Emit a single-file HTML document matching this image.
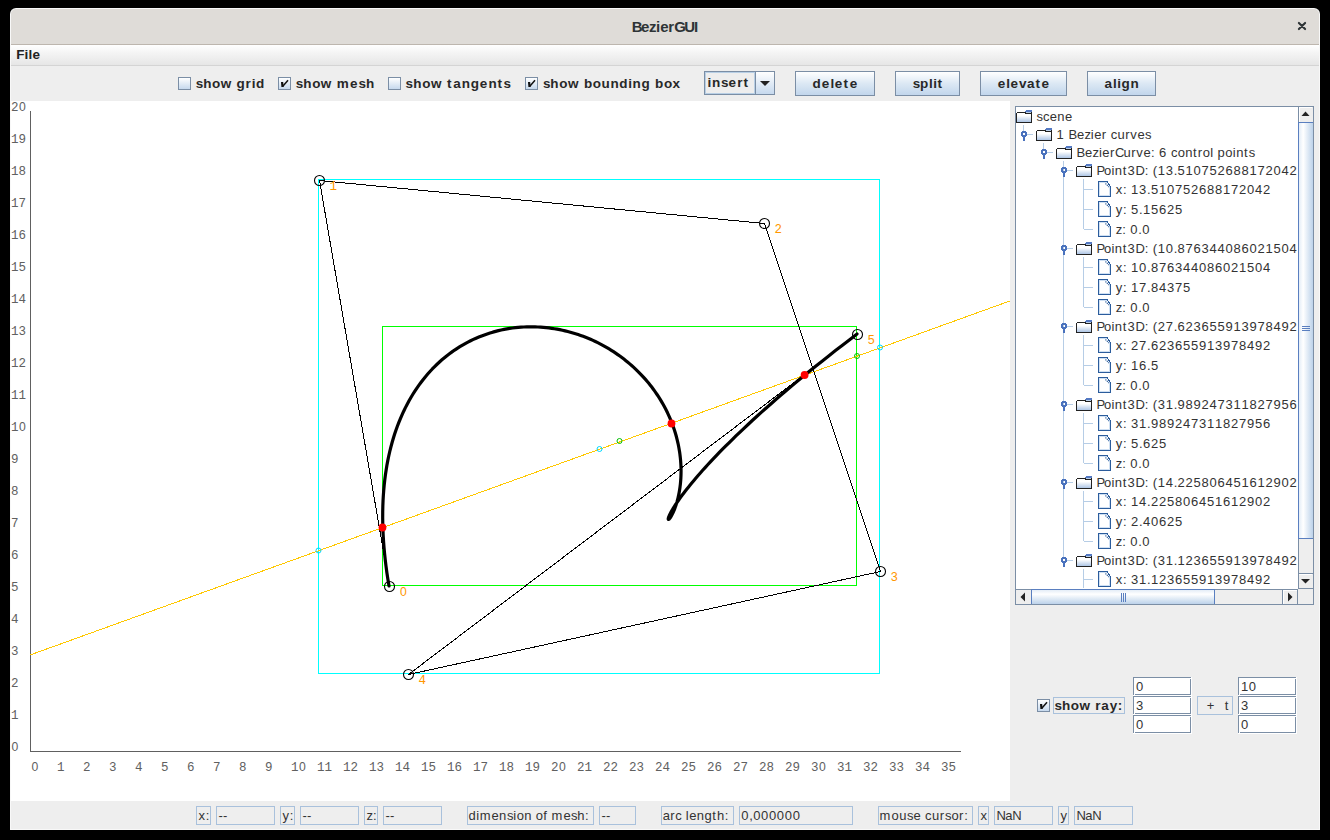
<!DOCTYPE html>
<html><head><meta charset="utf-8"><title>BezierGUI</title>
<style>
html,body{margin:0;padding:0;background:#000;width:1330px;height:840px;overflow:hidden;}
.b{position:absolute;}
.t{position:absolute;white-space:nowrap;}
</style></head><body>
<div class="b" style="left:10px;top:8px;width:1310px;height:822px;background:#f8f8f8;border-radius:6px 6px 0 0;"></div><div class="b" style="left:11px;top:9px;width:1308px;height:820px;background:#eeeeee;border-radius:5px 5px 0 0;"></div><div class="b" style="left:11px;top:9px;width:1308px;height:35px;background:#dfdcd8;border-radius:5px 5px 0 0;"></div><div class="b" style="left:11px;top:44px;width:1308px;height:1px;background:#bdb6ae;"></div><svg class="b" style="left:1297px;top:21px" width="12" height="10"><path d="M1.9 1.9 L8.1 8.1 M8.1 1.9 L1.9 8.1" stroke="#2e3436" stroke-width="2.1" stroke-linecap="round"/></svg><div class="b" style="left:11px;top:45px;width:1308px;height:20px;background:linear-gradient(#ffffff,#f4f4f4 40%,#e6e6e6);"></div><div class="b" style="left:11px;top:65px;width:1308px;height:1px;background:#d4d4d4;"></div><div class="b" style="left:11px;top:66px;width:1308px;height:35px;background:#eeeeee;"></div><div class="b" style="left:11px;top:101px;width:999px;height:700px;background:#ffffff;"></div><div class="b" style="left:11px;top:801px;width:1308px;height:28px;background:#eeeeee;"></div><div class="b" style="left:178px;top:77px;width:13px;height:13px;box-sizing:border-box;border:1px solid #7b8ea5;background:linear-gradient(#ffffff,#c6d9ee);"></div><div class="b" style="left:278px;top:77px;width:13px;height:13px;box-sizing:border-box;border:1px solid #7b8ea5;background:linear-gradient(#ffffff,#c6d9ee);"></div><svg class="b" style="left:278px;top:77px" width="13" height="13"><path d="M3 5 H5.2 L5.6 10 H3.4 Z" fill="#111"/><path d="M4.6 9.6 L10 3.3" stroke="#111" stroke-width="1.5" fill="none"/></svg><div class="b" style="left:388px;top:77px;width:13px;height:13px;box-sizing:border-box;border:1px solid #7b8ea5;background:linear-gradient(#ffffff,#c6d9ee);"></div><div class="b" style="left:525px;top:77px;width:13px;height:13px;box-sizing:border-box;border:1px solid #7b8ea5;background:linear-gradient(#ffffff,#c6d9ee);"></div><svg class="b" style="left:525px;top:77px" width="13" height="13"><path d="M3 5 H5.2 L5.6 10 H3.4 Z" fill="#111"/><path d="M4.6 9.6 L10 3.3" stroke="#111" stroke-width="1.5" fill="none"/></svg><div class="b" style="left:704px;top:71px;width:71px;height:24px;box-sizing:border-box;border:1px solid #7b8ea5;background:#eeeeee;"></div><div class="b" style="left:705px;top:72px;width:50px;height:22px;box-sizing:border-box;border:1px solid #b8cfe5;"></div><div class="b" style="left:755px;top:71px;width:1px;height:24px;background:#7b8ea5;"></div><div class="b" style="left:756px;top:72px;width:18px;height:22px;background:linear-gradient(#ffffff,#c6d9ee);"></div><svg class="b" style="left:758px;top:78px" width="14" height="10"><path d="M2 3 H12 L7 8 Z" fill="#222"/></svg><div class="b" style="left:795px;top:71px;width:80px;height:25px;box-sizing:border-box;border:1px solid #7b8ea5;background:linear-gradient(#ffffff,#dce8f4 50%,#c2d6ec);"></div><div class="b" style="left:895px;top:71px;width:65px;height:25px;box-sizing:border-box;border:1px solid #7b8ea5;background:linear-gradient(#ffffff,#dce8f4 50%,#c2d6ec);"></div><div class="b" style="left:980px;top:71px;width:87px;height:25px;box-sizing:border-box;border:1px solid #7b8ea5;background:linear-gradient(#ffffff,#dce8f4 50%,#c2d6ec);"></div><div class="b" style="left:1087px;top:71px;width:69px;height:25px;box-sizing:border-box;border:1px solid #7b8ea5;background:linear-gradient(#ffffff,#dce8f4 50%,#c2d6ec);"></div><svg class="b" style="left:0;top:0" width="1010" height="801" viewBox="0 0 1010 801"><defs><clipPath id="cv"><rect x="11" y="101" width="999" height="700"/></clipPath></defs><g clip-path="url(#cv)"><g shape-rendering="crispEdges" stroke="#606060" stroke-width="1"><line x1="30.5" y1="111" x2="30.5" y2="752"/><line x1="30" y1="751.5" x2="961" y2="751.5"/></g><g font-family="'Liberation Mono', monospace" font-size="12.5" fill="#606060"><text x="11" y="751"><tspan font-family="'Liberation Sans', sans-serif" font-size="12.2" dx="0.4">0</tspan></text><text x="11" y="719">1</text><text x="11" y="687">2</text><text x="11" y="655">3</text><text x="11" y="623">4</text><text x="11" y="591">5</text><text x="11" y="559">6</text><text x="11" y="527">7</text><text x="11" y="495">8</text><text x="11" y="463">9</text><text x="11" y="431">1<tspan font-family="'Liberation Sans', sans-serif" font-size="12.2" dx="0.4">0</tspan></text><text x="11" y="399">11</text><text x="11" y="367">12</text><text x="11" y="335">13</text><text x="11" y="303">14</text><text x="11" y="271">15</text><text x="11" y="239">16</text><text x="11" y="207">17</text><text x="11" y="175">18</text><text x="11" y="143">19</text><text x="11" y="111">2<tspan font-family="'Liberation Sans', sans-serif" font-size="12.2" dx="0.4">0</tspan></text><text x="31" y="771"><tspan font-family="'Liberation Sans', sans-serif" font-size="12.2" dx="0.4">0</tspan></text><text x="57" y="771">1</text><text x="83" y="771">2</text><text x="109" y="771">3</text><text x="135" y="771">4</text><text x="161" y="771">5</text><text x="187" y="771">6</text><text x="213" y="771">7</text><text x="239" y="771">8</text><text x="265" y="771">9</text><text x="291" y="771">1<tspan font-family="'Liberation Sans', sans-serif" font-size="12.2" dx="0.4">0</tspan></text><text x="317" y="771">11</text><text x="343" y="771">12</text><text x="369" y="771">13</text><text x="395" y="771">14</text><text x="421" y="771">15</text><text x="447" y="771">16</text><text x="473" y="771">17</text><text x="499" y="771">18</text><text x="525" y="771">19</text><text x="551" y="771">2<tspan font-family="'Liberation Sans', sans-serif" font-size="12.2" dx="0.4">0</tspan></text><text x="577" y="771">21</text><text x="603" y="771">22</text><text x="629" y="771">23</text><text x="655" y="771">24</text><text x="681" y="771">25</text><text x="707" y="771">26</text><text x="733" y="771">27</text><text x="759" y="771">28</text><text x="785" y="771">29</text><text x="811" y="771">3<tspan font-family="'Liberation Sans', sans-serif" font-size="12.2" dx="0.4">0</tspan></text><text x="837" y="771">31</text><text x="863" y="771">32</text><text x="889" y="771">33</text><text x="915" y="771">34</text><text x="941" y="771">35</text></g><g shape-rendering="crispEdges" fill="none" stroke-width="1"><rect x="318.5" y="179.5" width="561" height="494" stroke="#00ffff"/><rect x="382.5" y="326.5" width="474" height="259" stroke="#00ff00"/></g><line x1="30.0" y1="655.0" x2="1010.0000000000001" y2="300.93548387096774" stroke="#ffc800" stroke-width="1" shape-rendering="crispEdges"/><polyline points="389.5,586.5 319.5,180.5 764.5,223.5 880.5,571.5 408.5,674.5 857.5,334.5" fill="none" stroke="#000" stroke-width="1" shape-rendering="crispEdges"/><polyline points="389.00,586.00 387.89,579.28 386.89,572.67 386.01,566.15 385.23,559.73 384.56,553.41 383.99,547.18 383.53,541.06 383.17,535.03 382.91,529.10 382.75,523.27 382.68,517.53 382.71,511.89 382.83,506.34 383.04,500.89 383.34,495.53 383.73,490.27 384.20,485.10 384.76,480.03 385.39,475.05 386.11,470.16 386.91,465.36 387.79,460.65 388.74,456.04 389.76,451.52 390.86,447.09 392.03,442.74 393.26,438.49 394.56,434.33 395.93,430.25 397.36,426.26 398.86,422.37 400.41,418.55 402.03,414.83 403.70,411.19 405.43,407.63 407.21,404.17 409.05,400.78 410.93,397.48 412.87,394.27 414.86,391.13 416.89,388.08 418.97,385.11 421.09,382.23 423.25,379.42 425.46,376.69 427.71,374.05 429.99,371.48 432.31,368.99 434.67,366.59 437.06,364.25 439.48,362.00 441.93,359.82 444.42,357.72 446.93,355.69 449.47,353.74 452.04,351.86 454.63,350.05 457.24,348.32 459.88,346.66 462.54,345.07 465.22,343.56 467.91,342.11 470.62,340.73 473.35,339.43 476.10,338.19 478.85,337.02 481.62,335.91 484.40,334.88 487.19,333.91 489.99,333.00 492.80,332.16 495.61,331.39 498.43,330.67 501.25,330.02 504.08,329.44 506.91,328.91 509.74,328.44 512.57,328.04 515.40,327.69 518.23,327.41 521.05,327.18 523.87,327.01 526.69,326.89 529.50,326.83 532.30,326.83 535.10,326.88 537.89,326.99 540.66,327.14 543.43,327.36 546.19,327.62 548.93,327.93 551.66,328.30 554.38,328.71 557.08,329.18 559.77,329.69 562.44,330.25 565.09,330.85 567.73,331.51 570.34,332.20 572.94,332.95 575.52,333.73 578.08,334.56 580.61,335.43 583.13,336.35 585.62,337.30 588.08,338.30 590.53,339.33 592.95,340.41 595.34,341.52 597.71,342.67 600.05,343.85 602.36,345.07 604.65,346.33 606.90,347.62 609.13,348.94 611.33,350.30 613.50,351.69 615.64,353.11 617.75,354.56 619.83,356.03 621.88,357.54 623.90,359.08 625.88,360.64 627.83,362.23 629.75,363.85 631.64,365.49 633.49,367.15 635.30,368.84 637.09,370.55 638.84,372.29 640.55,374.04 642.23,375.81 643.87,377.61 645.48,379.42 647.05,381.25 648.59,383.10 650.09,384.96 651.56,386.84 652.98,388.73 654.38,390.64 655.73,392.56 657.05,394.50 658.33,396.44 659.58,398.40 660.79,400.36 661.96,402.34 663.09,404.32 664.19,406.31 665.26,408.31 666.28,410.31 667.27,412.32 668.22,414.34 669.14,416.35 670.02,418.37 670.86,420.39 671.67,422.42 672.44,424.44 673.18,426.46 673.88,428.48 674.55,430.50 675.18,432.52 675.78,434.53 676.34,436.54 676.87,438.54 677.36,440.54 677.83,442.53 678.26,444.51 678.65,446.48 679.02,448.45 679.35,450.40 679.65,452.35 679.92,454.28 680.16,456.20 680.37,458.10 680.55,460.00 680.70,461.87 680.82,463.73 680.92,465.58 680.99,467.41 681.03,469.22 681.05,471.01 681.04,472.78 681.00,474.53 680.94,476.26 680.86,477.97 680.76,479.65 680.63,481.31 680.49,482.95 680.32,484.56 680.13,486.14 679.93,487.70 679.70,489.23 679.46,490.74 679.20,492.21 678.93,493.65 678.65,495.06 678.35,496.45 678.04,497.79 677.71,499.11 677.38,500.39 677.04,501.64 676.68,502.85 676.32,504.03 675.96,505.17 675.59,506.27 675.21,507.33 674.84,508.35 674.46,509.34 674.08,510.28 673.70,511.18 673.32,512.04 672.95,512.86 672.58,513.63 672.21,514.36 671.86,515.04 671.51,515.67 671.17,516.26 670.84,516.81 670.52,517.30 670.22,517.74 669.94,518.14 669.67,518.48 669.41,518.78 669.18,519.02 668.97,519.21 668.78,519.34 668.62,519.42 668.48,519.45 668.37,519.42 668.29,519.33 668.24,519.19 668.22,518.99 668.23,518.73 668.28,518.41 668.37,518.04 668.50,517.60 668.67,517.10 668.88,516.54 669.14,515.91 669.45,515.23 669.80,514.48 670.20,513.66 670.66,512.78 671.17,511.83 671.73,510.82 672.36,509.73 673.04,508.58 673.79,507.37 674.60,506.08 675.47,504.72 676.42,503.29 677.44,501.79 678.53,500.22 679.69,498.58 680.93,496.86 682.25,495.07 683.65,493.20 685.14,491.26 686.71,489.24 688.38,487.15 690.13,484.98 691.97,482.73 693.91,480.40 695.95,478.00 698.09,475.51 700.33,472.95 702.68,470.30 705.14,467.57 707.70,464.76 710.38,461.87 713.18,458.90 716.09,455.84 719.12,452.70 722.28,449.47 725.56,446.16 728.98,442.76 732.52,439.27 736.20,435.70 740.01,432.04 743.97,428.29 748.07,424.46 752.31,420.53 756.70,416.52 761.25,412.41 765.94,408.21 770.80,403.93 775.81,399.55 780.99,395.08 786.34,390.51 791.85,385.85 797.54,381.10 803.40,376.26 809.44,371.32 815.66,366.28 822.07,361.15 828.67,355.92 835.46,350.60 842.44,345.18 849.62,339.66 857.00,334.04" fill="none" stroke="#000" stroke-width="3.2" stroke-linejoin="round" stroke-linecap="round"/><circle cx="389.5" cy="586.5" r="5" fill="none" stroke="#000" stroke-width="1.1"/><text x="399.5" y="596" font-family="'Liberation Mono', monospace" font-size="12.5" fill="#ff9600"><tspan font-family="'Liberation Sans', sans-serif" font-size="12.2" dx="0.4">0</tspan></text><circle cx="319.5" cy="180.5" r="5" fill="none" stroke="#000" stroke-width="1.1"/><text x="329.5" y="190" font-family="'Liberation Mono', monospace" font-size="12.5" fill="#ff9600">1</text><circle cx="764.5" cy="223.5" r="5" fill="none" stroke="#000" stroke-width="1.1"/><text x="774.5" y="233" font-family="'Liberation Mono', monospace" font-size="12.5" fill="#ff9600">2</text><circle cx="880.5" cy="571.5" r="5" fill="none" stroke="#000" stroke-width="1.1"/><text x="890.5" y="581" font-family="'Liberation Mono', monospace" font-size="12.5" fill="#ff9600">3</text><circle cx="408.5" cy="674.5" r="5" fill="none" stroke="#000" stroke-width="1.1"/><text x="418.5" y="684" font-family="'Liberation Mono', monospace" font-size="12.5" fill="#ff9600">4</text><circle cx="857.5" cy="334.5" r="5" fill="none" stroke="#000" stroke-width="1.1"/><text x="867.5" y="344" font-family="'Liberation Mono', monospace" font-size="12.5" fill="#ff9600">5</text><circle cx="318.5" cy="550.5" r="2.5" fill="none" stroke="#00d8ff" stroke-width="1"/><circle cx="880" cy="347.5" r="2.5" fill="none" stroke="#00d8ff" stroke-width="1"/><circle cx="599.5" cy="449" r="2.5" fill="none" stroke="#00d8ff" stroke-width="1"/><circle cx="857" cy="356" r="2.5" fill="none" stroke="#00c000" stroke-width="1"/><circle cx="619.5" cy="441" r="2.5" fill="none" stroke="#00c000" stroke-width="1"/><circle cx="382.5" cy="527.5" r="3.9" fill="#ff0000"/><circle cx="671.5" cy="423.5" r="3.9" fill="#ff0000"/><circle cx="804.6" cy="375" r="3.9" fill="#ff0000"/></g></svg><div class="b" style="left:1015px;top:106px;width:299px;height:499px;box-sizing:border-box;border:1px solid #7b8ea5;background:#fff;"></div><svg class="b" style="left:1016px;top:107px" width="281" height="481" viewBox="1016 107 281 481"><defs><linearGradient id="fg" x1="0" y1="0" x2="0" y2="1"><stop offset="0" stop-color="#fff"/><stop offset="0.3" stop-color="#fff"/><stop offset="1" stop-color="#aec6e6"/></linearGradient></defs><g stroke="#b6cde6" stroke-width="1" shape-rendering="crispEdges"><line x1="1023.5" y1="125" x2="1023.5" y2="131"/><line x1="1043.5" y1="143" x2="1043.5" y2="149"/><line x1="1063.5" y1="161" x2="1063.5" y2="557"/><line x1="1027" y1="134.5" x2="1033" y2="134.5"/><line x1="1047" y1="152.5" x2="1053" y2="152.5"/><line x1="1067" y1="170.5" x2="1073" y2="170.5"/><line x1="1083.5" y1="189.5" x2="1093" y2="189.5"/><line x1="1083.5" y1="209.5" x2="1093" y2="209.5"/><line x1="1083.5" y1="229.5" x2="1093" y2="229.5"/><line x1="1067" y1="248.5" x2="1073" y2="248.5"/><line x1="1083.5" y1="267.5" x2="1093" y2="267.5"/><line x1="1083.5" y1="287.5" x2="1093" y2="287.5"/><line x1="1083.5" y1="307.5" x2="1093" y2="307.5"/><line x1="1067" y1="326.5" x2="1073" y2="326.5"/><line x1="1083.5" y1="345.5" x2="1093" y2="345.5"/><line x1="1083.5" y1="365.5" x2="1093" y2="365.5"/><line x1="1083.5" y1="385.5" x2="1093" y2="385.5"/><line x1="1067" y1="404.5" x2="1073" y2="404.5"/><line x1="1083.5" y1="423.5" x2="1093" y2="423.5"/><line x1="1083.5" y1="443.5" x2="1093" y2="443.5"/><line x1="1083.5" y1="463.5" x2="1093" y2="463.5"/><line x1="1067" y1="482.5" x2="1073" y2="482.5"/><line x1="1083.5" y1="501.5" x2="1093" y2="501.5"/><line x1="1083.5" y1="521.5" x2="1093" y2="521.5"/><line x1="1083.5" y1="541.5" x2="1093" y2="541.5"/><line x1="1067" y1="560.5" x2="1073" y2="560.5"/><line x1="1083.5" y1="579.5" x2="1093" y2="579.5"/><line x1="1083.5" y1="599.5" x2="1093" y2="599.5"/><line x1="1083.5" y1="619.5" x2="1093" y2="619.5"/><line x1="1083.5" y1="179" x2="1083.5" y2="229"/><line x1="1083.5" y1="257" x2="1083.5" y2="307"/><line x1="1083.5" y1="335" x2="1083.5" y2="385"/><line x1="1083.5" y1="413" x2="1083.5" y2="463"/><line x1="1083.5" y1="491" x2="1083.5" y2="541"/><line x1="1083.5" y1="569" x2="1083.5" y2="600"/></g><g transform="translate(1016,110)" shape-rendering="crispEdges"><rect x="1" y="3" width="14" height="9" fill="url(#fg)"/><rect x="10" y="0" width="6" height="1" fill="#5479c2"/><rect x="9" y="1" width="7" height="1" fill="#5479c2"/><rect x="10" y="2" width="5" height="1" fill="#b7cde8"/><rect x="1" y="2" width="9" height="1" fill="#222"/><rect x="15" y="2" width="1" height="11" fill="#222"/><rect x="0" y="3" width="1" height="10" fill="#222"/><rect x="9" y="3" width="7" height="1" fill="#222"/><rect x="0" y="12" width="16" height="1" fill="#222"/></g><text font-family="'Liberation Sans', sans-serif" x="1036.60 1042.98 1049.71 1057.24 1064.99" y="121" font-size="13" fill="#333">scene</text><g transform="translate(1021,131)" shape-rendering="crispEdges"><path fill="#4a72bd" fill-rule="evenodd" d="M1 0 H5 V1 H6 V5 H5 V6 H4 V10 H2 V6 H1 V5 H0 V1 H1 Z M2 2 V4 H4 V2 Z"/></g><g transform="translate(1036,128)" shape-rendering="crispEdges"><rect x="1" y="3" width="14" height="9" fill="url(#fg)"/><rect x="10" y="0" width="6" height="1" fill="#5479c2"/><rect x="9" y="1" width="7" height="1" fill="#5479c2"/><rect x="10" y="2" width="5" height="1" fill="#b7cde8"/><rect x="1" y="2" width="9" height="1" fill="#222"/><rect x="15" y="2" width="1" height="11" fill="#222"/><rect x="0" y="3" width="1" height="10" fill="#222"/><rect x="9" y="3" width="7" height="1" fill="#222"/><rect x="0" y="12" width="16" height="1" fill="#222"/></g><text font-family="'Liberation Sans', sans-serif" x="1056.60 1064.60 1068.49 1076.89 1084.42 1090.84 1094.24 1101.77 1106.81 1110.70 1117.43 1125.18 1130.22 1137.46 1144.99" y="139" font-size="13" fill="#333">1&#160;Bezier&#160;curves</text><g transform="translate(1041,149)" shape-rendering="crispEdges"><path fill="#4a72bd" fill-rule="evenodd" d="M1 0 H5 V1 H6 V5 H5 V6 H4 V10 H2 V6 H1 V5 H0 V1 H1 Z M2 2 V4 H4 V2 Z"/></g><g transform="translate(1056,146)" shape-rendering="crispEdges"><rect x="1" y="3" width="14" height="9" fill="url(#fg)"/><rect x="10" y="0" width="6" height="1" fill="#5479c2"/><rect x="9" y="1" width="7" height="1" fill="#5479c2"/><rect x="10" y="2" width="5" height="1" fill="#b7cde8"/><rect x="1" y="2" width="9" height="1" fill="#222"/><rect x="15" y="2" width="1" height="11" fill="#222"/><rect x="0" y="3" width="1" height="10" fill="#222"/><rect x="9" y="3" width="7" height="1" fill="#222"/><rect x="0" y="12" width="16" height="1" fill="#222"/></g><text font-family="'Liberation Sans', sans-serif" x="1076.60 1085.00 1092.53 1098.95 1102.35 1109.88 1114.92 1123.46 1131.22 1136.25 1143.50 1151.03 1155.15 1159.04 1167.04 1170.93 1177.66 1185.15 1192.91 1197.71 1202.74 1210.23 1213.63 1217.52 1225.29 1232.78 1236.18 1243.94 1248.73" y="157" font-size="13" fill="#333">BezierCurve:&#160;6&#160;control&#160;points</text><g transform="translate(1061,167)" shape-rendering="crispEdges"><path fill="#4a72bd" fill-rule="evenodd" d="M1 0 H5 V1 H6 V5 H5 V6 H4 V10 H2 V6 H1 V5 H0 V1 H1 Z M2 2 V4 H4 V2 Z"/></g><g transform="translate(1076,164)" shape-rendering="crispEdges"><rect x="1" y="3" width="14" height="9" fill="url(#fg)"/><rect x="10" y="0" width="6" height="1" fill="#5479c2"/><rect x="9" y="1" width="7" height="1" fill="#5479c2"/><rect x="10" y="2" width="5" height="1" fill="#b7cde8"/><rect x="1" y="2" width="9" height="1" fill="#222"/><rect x="15" y="2" width="1" height="11" fill="#222"/><rect x="0" y="3" width="1" height="10" fill="#222"/><rect x="9" y="3" width="7" height="1" fill="#222"/><rect x="0" y="12" width="16" height="1" fill="#222"/></g><text font-family="'Liberation Sans', sans-serif" x="1096.60 1103.98 1111.47 1114.87 1122.63 1127.43 1135.43 1144.85 1148.98 1152.87 1157.64 1165.64 1173.64 1177.53 1185.53 1193.53 1201.53 1209.53 1217.53 1225.53 1233.53 1241.53 1249.53 1257.53 1265.53 1273.53 1281.53 1289.53 1297.53 1301.42 1305.31 1313.31 1317.20 1325.20 1333.20 1341.20 1349.20 1357.20 1361.10 1364.99 1372.99 1376.88 1384.88" y="175" font-size="13" fill="#333">Point3D:&#160;(13.510752688172042,&#160;5.15625,&#160;0.0)</text><g transform="translate(1098,181)" shape-rendering="crispEdges"><rect x="1" y="1" width="11" height="14" fill="#fff"/><path d="M1.5 14.5 V1.5 H9 M11.5 5 V14.5 H1.5" stroke="#cfe0f3" fill="none"/><path d="M0.5 15.5 V0.5 H9.5 V1.5 L12.5 5.5 V15.5 Z" stroke="#2b5c9c" fill="none"/><path d="M7.5 2.5 L11 6" stroke="#2b5c9c" stroke-width="1.2" stroke-dasharray="1.2 0.8" fill="none" shape-rendering="auto"/></g><text font-family="'Liberation Sans', sans-serif" x="1115.80 1123.04 1127.17 1131.06 1139.06 1147.06 1150.95 1158.95 1166.95 1174.95 1182.95 1190.95 1198.95 1206.95 1214.95 1222.95 1230.95 1238.95 1246.95 1254.95 1262.95" y="194" font-size="13" fill="#333">x:&#160;13.510752688172042</text><g transform="translate(1098,201)" shape-rendering="crispEdges"><rect x="1" y="1" width="11" height="14" fill="#fff"/><path d="M1.5 14.5 V1.5 H9 M11.5 5 V14.5 H1.5" stroke="#cfe0f3" fill="none"/><path d="M0.5 15.5 V0.5 H9.5 V1.5 L12.5 5.5 V15.5 Z" stroke="#2b5c9c" fill="none"/><path d="M7.5 2.5 L11 6" stroke="#2b5c9c" stroke-width="1.2" stroke-dasharray="1.2 0.8" fill="none" shape-rendering="auto"/></g><text font-family="'Liberation Sans', sans-serif" x="1115.80 1123.04 1127.17 1131.06 1139.06 1142.95 1150.95 1158.95 1166.95 1174.95" y="214" font-size="13" fill="#333">y:&#160;5.15625</text><g transform="translate(1098,221)" shape-rendering="crispEdges"><rect x="1" y="1" width="11" height="14" fill="#fff"/><path d="M1.5 14.5 V1.5 H9 M11.5 5 V14.5 H1.5" stroke="#cfe0f3" fill="none"/><path d="M0.5 15.5 V0.5 H9.5 V1.5 L12.5 5.5 V15.5 Z" stroke="#2b5c9c" fill="none"/><path d="M7.5 2.5 L11 6" stroke="#2b5c9c" stroke-width="1.2" stroke-dasharray="1.2 0.8" fill="none" shape-rendering="auto"/></g><text font-family="'Liberation Sans', sans-serif" x="1115.80 1122.22 1126.35 1130.24 1138.24 1142.13" y="234" font-size="13" fill="#333">z:&#160;0.0</text><g transform="translate(1061,245)" shape-rendering="crispEdges"><path fill="#4a72bd" fill-rule="evenodd" d="M1 0 H5 V1 H6 V5 H5 V6 H4 V10 H2 V6 H1 V5 H0 V1 H1 Z M2 2 V4 H4 V2 Z"/></g><g transform="translate(1076,242)" shape-rendering="crispEdges"><rect x="1" y="3" width="14" height="9" fill="url(#fg)"/><rect x="10" y="0" width="6" height="1" fill="#5479c2"/><rect x="9" y="1" width="7" height="1" fill="#5479c2"/><rect x="10" y="2" width="5" height="1" fill="#b7cde8"/><rect x="1" y="2" width="9" height="1" fill="#222"/><rect x="15" y="2" width="1" height="11" fill="#222"/><rect x="0" y="3" width="1" height="10" fill="#222"/><rect x="9" y="3" width="7" height="1" fill="#222"/><rect x="0" y="12" width="16" height="1" fill="#222"/></g><text font-family="'Liberation Sans', sans-serif" x="1096.60 1103.98 1111.47 1114.87 1122.63 1127.43 1135.43 1144.85 1148.98 1152.87 1157.64 1165.64 1173.64 1177.53 1185.53 1193.53 1201.53 1209.53 1217.53 1225.53 1233.53 1241.53 1249.53 1257.53 1265.53 1273.53 1281.53 1289.53 1297.53 1301.42 1305.31 1313.31 1321.31 1325.20 1333.20 1341.20 1349.20 1357.20 1365.20 1369.10 1372.99 1380.99 1384.88 1392.88" y="253" font-size="13" fill="#333">Point3D:&#160;(10.876344086021504,&#160;17.84375,&#160;0.0)</text><g transform="translate(1098,259)" shape-rendering="crispEdges"><rect x="1" y="1" width="11" height="14" fill="#fff"/><path d="M1.5 14.5 V1.5 H9 M11.5 5 V14.5 H1.5" stroke="#cfe0f3" fill="none"/><path d="M0.5 15.5 V0.5 H9.5 V1.5 L12.5 5.5 V15.5 Z" stroke="#2b5c9c" fill="none"/><path d="M7.5 2.5 L11 6" stroke="#2b5c9c" stroke-width="1.2" stroke-dasharray="1.2 0.8" fill="none" shape-rendering="auto"/></g><text font-family="'Liberation Sans', sans-serif" x="1115.80 1123.04 1127.17 1131.06 1139.06 1147.06 1150.95 1158.95 1166.95 1174.95 1182.95 1190.95 1198.95 1206.95 1214.95 1222.95 1230.95 1238.95 1246.95 1254.95 1262.95" y="272" font-size="13" fill="#333">x:&#160;10.876344086021504</text><g transform="translate(1098,279)" shape-rendering="crispEdges"><rect x="1" y="1" width="11" height="14" fill="#fff"/><path d="M1.5 14.5 V1.5 H9 M11.5 5 V14.5 H1.5" stroke="#cfe0f3" fill="none"/><path d="M0.5 15.5 V0.5 H9.5 V1.5 L12.5 5.5 V15.5 Z" stroke="#2b5c9c" fill="none"/><path d="M7.5 2.5 L11 6" stroke="#2b5c9c" stroke-width="1.2" stroke-dasharray="1.2 0.8" fill="none" shape-rendering="auto"/></g><text font-family="'Liberation Sans', sans-serif" x="1115.80 1123.04 1127.17 1131.06 1139.06 1147.06 1150.95 1158.95 1166.95 1174.95 1182.95" y="292" font-size="13" fill="#333">y:&#160;17.84375</text><g transform="translate(1098,299)" shape-rendering="crispEdges"><rect x="1" y="1" width="11" height="14" fill="#fff"/><path d="M1.5 14.5 V1.5 H9 M11.5 5 V14.5 H1.5" stroke="#cfe0f3" fill="none"/><path d="M0.5 15.5 V0.5 H9.5 V1.5 L12.5 5.5 V15.5 Z" stroke="#2b5c9c" fill="none"/><path d="M7.5 2.5 L11 6" stroke="#2b5c9c" stroke-width="1.2" stroke-dasharray="1.2 0.8" fill="none" shape-rendering="auto"/></g><text font-family="'Liberation Sans', sans-serif" x="1115.80 1122.22 1126.35 1130.24 1138.24 1142.13" y="312" font-size="13" fill="#333">z:&#160;0.0</text><g transform="translate(1061,323)" shape-rendering="crispEdges"><path fill="#4a72bd" fill-rule="evenodd" d="M1 0 H5 V1 H6 V5 H5 V6 H4 V10 H2 V6 H1 V5 H0 V1 H1 Z M2 2 V4 H4 V2 Z"/></g><g transform="translate(1076,320)" shape-rendering="crispEdges"><rect x="1" y="3" width="14" height="9" fill="url(#fg)"/><rect x="10" y="0" width="6" height="1" fill="#5479c2"/><rect x="9" y="1" width="7" height="1" fill="#5479c2"/><rect x="10" y="2" width="5" height="1" fill="#b7cde8"/><rect x="1" y="2" width="9" height="1" fill="#222"/><rect x="15" y="2" width="1" height="11" fill="#222"/><rect x="0" y="3" width="1" height="10" fill="#222"/><rect x="9" y="3" width="7" height="1" fill="#222"/><rect x="0" y="12" width="16" height="1" fill="#222"/></g><text font-family="'Liberation Sans', sans-serif" x="1096.60 1103.98 1111.47 1114.87 1122.63 1127.43 1135.43 1144.85 1148.98 1152.87 1157.64 1165.64 1173.64 1177.53 1185.53 1193.53 1201.53 1209.53 1217.53 1225.53 1233.53 1241.53 1249.53 1257.53 1265.53 1273.53 1281.53 1289.53 1297.53 1301.42 1305.31 1313.31 1321.31 1325.20 1333.20 1337.10 1340.99 1348.99 1352.88 1360.88" y="331" font-size="13" fill="#333">Point3D:&#160;(27.623655913978492,&#160;16.5,&#160;0.0)</text><g transform="translate(1098,337)" shape-rendering="crispEdges"><rect x="1" y="1" width="11" height="14" fill="#fff"/><path d="M1.5 14.5 V1.5 H9 M11.5 5 V14.5 H1.5" stroke="#cfe0f3" fill="none"/><path d="M0.5 15.5 V0.5 H9.5 V1.5 L12.5 5.5 V15.5 Z" stroke="#2b5c9c" fill="none"/><path d="M7.5 2.5 L11 6" stroke="#2b5c9c" stroke-width="1.2" stroke-dasharray="1.2 0.8" fill="none" shape-rendering="auto"/></g><text font-family="'Liberation Sans', sans-serif" x="1115.80 1123.04 1127.17 1131.06 1139.06 1147.06 1150.95 1158.95 1166.95 1174.95 1182.95 1190.95 1198.95 1206.95 1214.95 1222.95 1230.95 1238.95 1246.95 1254.95 1262.95" y="350" font-size="13" fill="#333">x:&#160;27.623655913978492</text><g transform="translate(1098,357)" shape-rendering="crispEdges"><rect x="1" y="1" width="11" height="14" fill="#fff"/><path d="M1.5 14.5 V1.5 H9 M11.5 5 V14.5 H1.5" stroke="#cfe0f3" fill="none"/><path d="M0.5 15.5 V0.5 H9.5 V1.5 L12.5 5.5 V15.5 Z" stroke="#2b5c9c" fill="none"/><path d="M7.5 2.5 L11 6" stroke="#2b5c9c" stroke-width="1.2" stroke-dasharray="1.2 0.8" fill="none" shape-rendering="auto"/></g><text font-family="'Liberation Sans', sans-serif" x="1115.80 1123.04 1127.17 1131.06 1139.06 1147.06 1150.95" y="370" font-size="13" fill="#333">y:&#160;16.5</text><g transform="translate(1098,377)" shape-rendering="crispEdges"><rect x="1" y="1" width="11" height="14" fill="#fff"/><path d="M1.5 14.5 V1.5 H9 M11.5 5 V14.5 H1.5" stroke="#cfe0f3" fill="none"/><path d="M0.5 15.5 V0.5 H9.5 V1.5 L12.5 5.5 V15.5 Z" stroke="#2b5c9c" fill="none"/><path d="M7.5 2.5 L11 6" stroke="#2b5c9c" stroke-width="1.2" stroke-dasharray="1.2 0.8" fill="none" shape-rendering="auto"/></g><text font-family="'Liberation Sans', sans-serif" x="1115.80 1122.22 1126.35 1130.24 1138.24 1142.13" y="390" font-size="13" fill="#333">z:&#160;0.0</text><g transform="translate(1061,401)" shape-rendering="crispEdges"><path fill="#4a72bd" fill-rule="evenodd" d="M1 0 H5 V1 H6 V5 H5 V6 H4 V10 H2 V6 H1 V5 H0 V1 H1 Z M2 2 V4 H4 V2 Z"/></g><g transform="translate(1076,398)" shape-rendering="crispEdges"><rect x="1" y="3" width="14" height="9" fill="url(#fg)"/><rect x="10" y="0" width="6" height="1" fill="#5479c2"/><rect x="9" y="1" width="7" height="1" fill="#5479c2"/><rect x="10" y="2" width="5" height="1" fill="#b7cde8"/><rect x="1" y="2" width="9" height="1" fill="#222"/><rect x="15" y="2" width="1" height="11" fill="#222"/><rect x="0" y="3" width="1" height="10" fill="#222"/><rect x="9" y="3" width="7" height="1" fill="#222"/><rect x="0" y="12" width="16" height="1" fill="#222"/></g><text font-family="'Liberation Sans', sans-serif" x="1096.60 1103.98 1111.47 1114.87 1122.63 1127.43 1135.43 1144.85 1148.98 1152.87 1157.64 1165.64 1173.64 1177.53 1185.53 1193.53 1201.53 1209.53 1217.53 1225.53 1233.53 1241.53 1249.53 1257.53 1265.53 1273.53 1281.53 1289.53 1297.53 1301.42 1305.31 1313.31 1317.20 1325.20 1333.20 1341.20 1345.10 1348.99 1356.99 1360.88 1368.88" y="409" font-size="13" fill="#333">Point3D:&#160;(31.989247311827956,&#160;5.625,&#160;0.0)</text><g transform="translate(1098,415)" shape-rendering="crispEdges"><rect x="1" y="1" width="11" height="14" fill="#fff"/><path d="M1.5 14.5 V1.5 H9 M11.5 5 V14.5 H1.5" stroke="#cfe0f3" fill="none"/><path d="M0.5 15.5 V0.5 H9.5 V1.5 L12.5 5.5 V15.5 Z" stroke="#2b5c9c" fill="none"/><path d="M7.5 2.5 L11 6" stroke="#2b5c9c" stroke-width="1.2" stroke-dasharray="1.2 0.8" fill="none" shape-rendering="auto"/></g><text font-family="'Liberation Sans', sans-serif" x="1115.80 1123.04 1127.17 1131.06 1139.06 1147.06 1150.95 1158.95 1166.95 1174.95 1182.95 1190.95 1198.95 1206.95 1214.95 1222.95 1230.95 1238.95 1246.95 1254.95 1262.95" y="428" font-size="13" fill="#333">x:&#160;31.989247311827956</text><g transform="translate(1098,435)" shape-rendering="crispEdges"><rect x="1" y="1" width="11" height="14" fill="#fff"/><path d="M1.5 14.5 V1.5 H9 M11.5 5 V14.5 H1.5" stroke="#cfe0f3" fill="none"/><path d="M0.5 15.5 V0.5 H9.5 V1.5 L12.5 5.5 V15.5 Z" stroke="#2b5c9c" fill="none"/><path d="M7.5 2.5 L11 6" stroke="#2b5c9c" stroke-width="1.2" stroke-dasharray="1.2 0.8" fill="none" shape-rendering="auto"/></g><text font-family="'Liberation Sans', sans-serif" x="1115.80 1123.04 1127.17 1131.06 1139.06 1142.95 1150.95 1158.95" y="448" font-size="13" fill="#333">y:&#160;5.625</text><g transform="translate(1098,455)" shape-rendering="crispEdges"><rect x="1" y="1" width="11" height="14" fill="#fff"/><path d="M1.5 14.5 V1.5 H9 M11.5 5 V14.5 H1.5" stroke="#cfe0f3" fill="none"/><path d="M0.5 15.5 V0.5 H9.5 V1.5 L12.5 5.5 V15.5 Z" stroke="#2b5c9c" fill="none"/><path d="M7.5 2.5 L11 6" stroke="#2b5c9c" stroke-width="1.2" stroke-dasharray="1.2 0.8" fill="none" shape-rendering="auto"/></g><text font-family="'Liberation Sans', sans-serif" x="1115.80 1122.22 1126.35 1130.24 1138.24 1142.13" y="468" font-size="13" fill="#333">z:&#160;0.0</text><g transform="translate(1061,479)" shape-rendering="crispEdges"><path fill="#4a72bd" fill-rule="evenodd" d="M1 0 H5 V1 H6 V5 H5 V6 H4 V10 H2 V6 H1 V5 H0 V1 H1 Z M2 2 V4 H4 V2 Z"/></g><g transform="translate(1076,476)" shape-rendering="crispEdges"><rect x="1" y="3" width="14" height="9" fill="url(#fg)"/><rect x="10" y="0" width="6" height="1" fill="#5479c2"/><rect x="9" y="1" width="7" height="1" fill="#5479c2"/><rect x="10" y="2" width="5" height="1" fill="#b7cde8"/><rect x="1" y="2" width="9" height="1" fill="#222"/><rect x="15" y="2" width="1" height="11" fill="#222"/><rect x="0" y="3" width="1" height="10" fill="#222"/><rect x="9" y="3" width="7" height="1" fill="#222"/><rect x="0" y="12" width="16" height="1" fill="#222"/></g><text font-family="'Liberation Sans', sans-serif" x="1096.60 1103.98 1111.47 1114.87 1122.63 1127.43 1135.43 1144.85 1148.98 1152.87 1157.64 1165.64 1173.64 1177.53 1185.53 1193.53 1201.53 1209.53 1217.53 1225.53 1233.53 1241.53 1249.53 1257.53 1265.53 1273.53 1281.53 1289.53 1297.53 1301.42 1305.31 1313.31 1317.20 1325.20 1333.20 1341.20 1349.20 1357.20 1361.10 1364.99 1372.99 1376.88 1384.88" y="487" font-size="13" fill="#333">Point3D:&#160;(14.225806451612902,&#160;2.40625,&#160;0.0)</text><g transform="translate(1098,493)" shape-rendering="crispEdges"><rect x="1" y="1" width="11" height="14" fill="#fff"/><path d="M1.5 14.5 V1.5 H9 M11.5 5 V14.5 H1.5" stroke="#cfe0f3" fill="none"/><path d="M0.5 15.5 V0.5 H9.5 V1.5 L12.5 5.5 V15.5 Z" stroke="#2b5c9c" fill="none"/><path d="M7.5 2.5 L11 6" stroke="#2b5c9c" stroke-width="1.2" stroke-dasharray="1.2 0.8" fill="none" shape-rendering="auto"/></g><text font-family="'Liberation Sans', sans-serif" x="1115.80 1123.04 1127.17 1131.06 1139.06 1147.06 1150.95 1158.95 1166.95 1174.95 1182.95 1190.95 1198.95 1206.95 1214.95 1222.95 1230.95 1238.95 1246.95 1254.95 1262.95" y="506" font-size="13" fill="#333">x:&#160;14.225806451612902</text><g transform="translate(1098,513)" shape-rendering="crispEdges"><rect x="1" y="1" width="11" height="14" fill="#fff"/><path d="M1.5 14.5 V1.5 H9 M11.5 5 V14.5 H1.5" stroke="#cfe0f3" fill="none"/><path d="M0.5 15.5 V0.5 H9.5 V1.5 L12.5 5.5 V15.5 Z" stroke="#2b5c9c" fill="none"/><path d="M7.5 2.5 L11 6" stroke="#2b5c9c" stroke-width="1.2" stroke-dasharray="1.2 0.8" fill="none" shape-rendering="auto"/></g><text font-family="'Liberation Sans', sans-serif" x="1115.80 1123.04 1127.17 1131.06 1139.06 1142.95 1150.95 1158.95 1166.95 1174.95" y="526" font-size="13" fill="#333">y:&#160;2.40625</text><g transform="translate(1098,533)" shape-rendering="crispEdges"><rect x="1" y="1" width="11" height="14" fill="#fff"/><path d="M1.5 14.5 V1.5 H9 M11.5 5 V14.5 H1.5" stroke="#cfe0f3" fill="none"/><path d="M0.5 15.5 V0.5 H9.5 V1.5 L12.5 5.5 V15.5 Z" stroke="#2b5c9c" fill="none"/><path d="M7.5 2.5 L11 6" stroke="#2b5c9c" stroke-width="1.2" stroke-dasharray="1.2 0.8" fill="none" shape-rendering="auto"/></g><text font-family="'Liberation Sans', sans-serif" x="1115.80 1122.22 1126.35 1130.24 1138.24 1142.13" y="546" font-size="13" fill="#333">z:&#160;0.0</text><g transform="translate(1061,557)" shape-rendering="crispEdges"><path fill="#4a72bd" fill-rule="evenodd" d="M1 0 H5 V1 H6 V5 H5 V6 H4 V10 H2 V6 H1 V5 H0 V1 H1 Z M2 2 V4 H4 V2 Z"/></g><g transform="translate(1076,554)" shape-rendering="crispEdges"><rect x="1" y="3" width="14" height="9" fill="url(#fg)"/><rect x="10" y="0" width="6" height="1" fill="#5479c2"/><rect x="9" y="1" width="7" height="1" fill="#5479c2"/><rect x="10" y="2" width="5" height="1" fill="#b7cde8"/><rect x="1" y="2" width="9" height="1" fill="#222"/><rect x="15" y="2" width="1" height="11" fill="#222"/><rect x="0" y="3" width="1" height="10" fill="#222"/><rect x="9" y="3" width="7" height="1" fill="#222"/><rect x="0" y="12" width="16" height="1" fill="#222"/></g><text font-family="'Liberation Sans', sans-serif" x="1096.60 1103.98 1111.47 1114.87 1122.63 1127.43 1135.43 1144.85 1148.98 1152.87 1157.64 1165.64 1173.64 1177.53 1185.53 1193.53 1201.53 1209.53 1217.53 1225.53 1233.53 1241.53 1249.53 1257.53 1265.53 1273.53 1281.53 1289.53 1297.53 1301.42 1305.31 1313.31 1321.31 1325.20 1333.20 1341.20 1345.10 1348.99 1356.99 1360.88 1368.88" y="565" font-size="13" fill="#333">Point3D:&#160;(31.123655913978492,&#160;13.03,&#160;0.0)</text><g transform="translate(1098,571)" shape-rendering="crispEdges"><rect x="1" y="1" width="11" height="14" fill="#fff"/><path d="M1.5 14.5 V1.5 H9 M11.5 5 V14.5 H1.5" stroke="#cfe0f3" fill="none"/><path d="M0.5 15.5 V0.5 H9.5 V1.5 L12.5 5.5 V15.5 Z" stroke="#2b5c9c" fill="none"/><path d="M7.5 2.5 L11 6" stroke="#2b5c9c" stroke-width="1.2" stroke-dasharray="1.2 0.8" fill="none" shape-rendering="auto"/></g><text font-family="'Liberation Sans', sans-serif" x="1115.80 1123.04 1127.17 1131.06 1139.06 1147.06 1150.95 1158.95 1166.95 1174.95 1182.95 1190.95 1198.95 1206.95 1214.95 1222.95 1230.95 1238.95 1246.95 1254.95 1262.95" y="584" font-size="13" fill="#333">x:&#160;31.123655913978492</text><g transform="translate(1098,591)" shape-rendering="crispEdges"><rect x="1" y="1" width="11" height="14" fill="#fff"/><path d="M1.5 14.5 V1.5 H9 M11.5 5 V14.5 H1.5" stroke="#cfe0f3" fill="none"/><path d="M0.5 15.5 V0.5 H9.5 V1.5 L12.5 5.5 V15.5 Z" stroke="#2b5c9c" fill="none"/><path d="M7.5 2.5 L11 6" stroke="#2b5c9c" stroke-width="1.2" stroke-dasharray="1.2 0.8" fill="none" shape-rendering="auto"/></g><text font-family="'Liberation Sans', sans-serif" x="1115.80 1123.04 1127.17 1131.06 1139.06 1147.06 1150.95 1158.95" y="604" font-size="13" fill="#333">y:&#160;13.03</text><g transform="translate(1098,611)" shape-rendering="crispEdges"><rect x="1" y="1" width="11" height="14" fill="#fff"/><path d="M1.5 14.5 V1.5 H9 M11.5 5 V14.5 H1.5" stroke="#cfe0f3" fill="none"/><path d="M0.5 15.5 V0.5 H9.5 V1.5 L12.5 5.5 V15.5 Z" stroke="#2b5c9c" fill="none"/><path d="M7.5 2.5 L11 6" stroke="#2b5c9c" stroke-width="1.2" stroke-dasharray="1.2 0.8" fill="none" shape-rendering="auto"/></g><text font-family="'Liberation Sans', sans-serif" x="1115.80 1122.22 1126.35 1130.24 1138.24 1142.13" y="624" font-size="13" fill="#333">z:&#160;0.0</text></svg><svg class="b" style="left:0;top:0" width="1330" height="840" shape-rendering="crispEdges"><defs><linearGradient id="tv" x1="0" y1="0" x2="1" y2="0"><stop offset="0" stop-color="#e4edf7"/><stop offset="0.3" stop-color="#ffffff"/><stop offset="1" stop-color="#bcd2ea"/></linearGradient><linearGradient id="th" x1="0" y1="0" x2="0" y2="1"><stop offset="0" stop-color="#e4edf7"/><stop offset="0.3" stop-color="#ffffff"/><stop offset="1" stop-color="#bcd2ea"/></linearGradient></defs><rect x="1298" y="107" width="15" height="482" fill="#eeeeee"/><rect x="1299" y="107" width="13" height="1" fill="#fff"/><rect x="1299" y="107" width="1" height="15" fill="#fff"/><path d="M1301.5 116 H1309.5 L1305.5 111.5 Z" fill="#222" shape-rendering="auto"/><rect x="1299" y="123" width="14" height="415" fill="url(#tv)"/><rect x="1298" y="122" width="15" height="1" fill="#5a7fc0"/><rect x="1298" y="538" width="15" height="1" fill="#5a7fc0"/><rect x="1298" y="122" width="1" height="417" fill="#5a7fc0"/><rect x="1302" y="326" width="8" height="1" fill="#5a7fc0"/><rect x="1302" y="328" width="8" height="1" fill="#5a7fc0"/><rect x="1302" y="330" width="8" height="1" fill="#5a7fc0"/><rect x="1298" y="107" width="1" height="15" fill="#7b8ea5"/><rect x="1298" y="539" width="1" height="50" fill="#7b8ea5"/><rect x="1299" y="573" width="14" height="1" fill="#7b8ea5"/><rect x="1299" y="574" width="13" height="1" fill="#fff"/><path d="M1301 579 H1310 L1305.5 583.5 Z" fill="#222" shape-rendering="auto"/><rect x="1298" y="588" width="15" height="1" fill="#7b8ea5"/><rect x="1016" y="589" width="282" height="15" fill="#eeeeee"/><rect x="1016" y="589" width="282" height="1" fill="#7b8ea5"/><path d="M1025 592.5 V601.5 L1020.5 597 Z" fill="#222" shape-rendering="auto"/><rect x="1032" y="590" width="182" height="14" fill="url(#th)"/><rect x="1031" y="589" width="184" height="1" fill="#5a7fc0"/><rect x="1031" y="589" width="1" height="15" fill="#5a7fc0"/><rect x="1214" y="589" width="1" height="15" fill="#5a7fc0"/><rect x="1121" y="593" width="1" height="9" fill="#5a7fc0"/><rect x="1123" y="593" width="1" height="9" fill="#5a7fc0"/><rect x="1125" y="593" width="1" height="9" fill="#5a7fc0"/><rect x="1282" y="590" width="1" height="14" fill="#7b8ea5"/><rect x="1283" y="590" width="14" height="1" fill="#fff"/><rect x="1283" y="590" width="1" height="14" fill="#fff"/><path d="M1288 592.5 V601.5 L1292.5 597 Z" fill="#222" shape-rendering="auto"/><rect x="1297" y="589" width="1" height="15" fill="#7b8ea5"/><rect x="1298" y="589" width="15" height="15" fill="#eeeeee"/></svg><div class="b" style="left:1015px;top:604px;width:299px;height:1px;background:#7b8ea5;"></div><div class="b" style="left:1313px;top:106px;width:1px;height:499px;background:#7b8ea5;"></div><div class="b" style="left:1037px;top:699px;width:13px;height:13px;box-sizing:border-box;border:1px solid #7b8ea5;background:linear-gradient(#ffffff,#c6d9ee);"></div><svg class="b" style="left:1037px;top:699px" width="13" height="13"><path d="M3 5 H5.2 L5.6 10 H3.4 Z" fill="#111"/><path d="M4.6 9.6 L10 3.3" stroke="#111" stroke-width="1.5" fill="none"/></svg><div class="b" style="left:1053px;top:697px;width:72px;height:17px;box-sizing:border-box;border:1px solid #a9c1dc;"></div><svg class="b" style="left:1133px;top:677px" width="59" height="19" shape-rendering="crispEdges"><rect x="0" y="0" width="59" height="19" fill="#fff"/><path d="M0.5 18 V0.5 H58 M2 17.5 H57.5 V2" stroke="#7b8ea5" fill="none"/></svg><svg class="b" style="left:1133px;top:696px" width="59" height="19" shape-rendering="crispEdges"><rect x="0" y="0" width="59" height="19" fill="#fff"/><path d="M0.5 18 V0.5 H58 M2 17.5 H57.5 V2" stroke="#7b8ea5" fill="none"/></svg><svg class="b" style="left:1133px;top:715px" width="59" height="19" shape-rendering="crispEdges"><rect x="0" y="0" width="59" height="19" fill="#fff"/><path d="M0.5 18 V0.5 H58 M2 17.5 H57.5 V2" stroke="#7b8ea5" fill="none"/></svg><svg class="b" style="left:1238px;top:677px" width="59" height="19" shape-rendering="crispEdges"><rect x="0" y="0" width="59" height="19" fill="#fff"/><path d="M0.5 18 V0.5 H58 M2 17.5 H57.5 V2" stroke="#7b8ea5" fill="none"/></svg><svg class="b" style="left:1238px;top:696px" width="59" height="19" shape-rendering="crispEdges"><rect x="0" y="0" width="59" height="19" fill="#fff"/><path d="M0.5 18 V0.5 H58 M2 17.5 H57.5 V2" stroke="#7b8ea5" fill="none"/></svg><svg class="b" style="left:1238px;top:715px" width="59" height="19" shape-rendering="crispEdges"><rect x="0" y="0" width="59" height="19" fill="#fff"/><path d="M0.5 18 V0.5 H58 M2 17.5 H57.5 V2" stroke="#7b8ea5" fill="none"/></svg><div class="b" style="left:1197px;top:696px;width:36px;height:19px;box-sizing:border-box;border:1px solid #a9c1dc;"></div><div class="b" style="left:196px;top:806px;width:15px;height:19px;box-sizing:border-box;border:1px solid #a9c1dc;"></div><div class="b" style="left:216px;top:806px;width:59px;height:19px;box-sizing:border-box;border:1px solid #a9c1dc;"></div><div class="b" style="left:280px;top:806px;width:15px;height:19px;box-sizing:border-box;border:1px solid #a9c1dc;"></div><div class="b" style="left:300px;top:806px;width:59px;height:19px;box-sizing:border-box;border:1px solid #a9c1dc;"></div><div class="b" style="left:364px;top:806px;width:14px;height:19px;box-sizing:border-box;border:1px solid #a9c1dc;"></div><div class="b" style="left:383px;top:806px;width:59px;height:19px;box-sizing:border-box;border:1px solid #a9c1dc;"></div><div class="b" style="left:467px;top:806px;width:127px;height:19px;box-sizing:border-box;border:1px solid #a9c1dc;"></div><div class="b" style="left:599px;top:806px;width:37px;height:19px;box-sizing:border-box;border:1px solid #a9c1dc;"></div><div class="b" style="left:661px;top:806px;width:73px;height:19px;box-sizing:border-box;border:1px solid #a9c1dc;"></div><div class="b" style="left:739px;top:806px;width:114px;height:19px;box-sizing:border-box;border:1px solid #a9c1dc;"></div><div class="b" style="left:878px;top:806px;width:95px;height:19px;box-sizing:border-box;border:1px solid #a9c1dc;"></div><div class="b" style="left:978px;top:806px;width:11px;height:19px;box-sizing:border-box;border:1px solid #a9c1dc;"></div><div class="b" style="left:994px;top:806px;width:59px;height:19px;box-sizing:border-box;border:1px solid #a9c1dc;"></div><div class="b" style="left:1058px;top:806px;width:11px;height:19px;box-sizing:border-box;border:1px solid #a9c1dc;"></div><div class="b" style="left:1074px;top:806px;width:59px;height:19px;box-sizing:border-box;border:1px solid #a9c1dc;"></div><svg class="b" style="left:0;top:0" width="1330" height="840" font-family="'Liberation Sans', sans-serif"><text x="631.80 640.96 649.11 656.10 660.22 668.37 674.29 684.16 693.91" y="32" font-size="15" fill="#2e3436" font-weight="bold">BezierGUI</text><text x="16.30 24.39 28.44 32.50" y="59" font-size="13.5" fill="#222" font-weight="bold">File</text><text x="195.70 203.16 212.07 220.68 232.25 236.61 245.58 251.76 256.05" y="88" font-size="13.5" fill="#282828" font-weight="bold">show&#160;grid</text><text x="295.70 303.20 312.18 320.83 332.48 336.87 350.00 358.55 366.05" y="88" font-size="13.5" fill="#282828" font-weight="bold">show&#160;mesh</text><text x="405.60 413.16 422.20 430.93 442.67 447.09 453.16 461.73 470.78 479.87 488.48 497.53 503.60" y="88" font-size="13.5" fill="#282828" font-weight="bold">show&#160;tangents</text><text x="542.90 550.37 559.30 567.92 579.51 583.88 592.86 601.48 610.41 619.34 628.32 632.62 641.55 650.53 654.90 663.88 672.50" y="88" font-size="13.5" fill="#282828" font-weight="bold">show&#160;bounding&#160;box</text><text x="707.60 711.96 721.02 728.59 737.22 743.50" y="87" font-size="13.5" fill="#282828" font-weight="bold">insert</text><text x="812.60 821.78 830.48 834.87 843.57 849.70" y="88" font-size="13.5" fill="#282828" font-weight="bold">delete</text><text x="912.70 920.12 929.05 933.33 937.60" y="88" font-size="13.5" fill="#282828" font-weight="bold">split</text><text x="997.70 1006.18 1010.46 1018.94 1027.09 1035.52 1041.50" y="88" font-size="13.5" fill="#282828" font-weight="bold">elevate</text><text x="1104.60 1113.03 1117.32 1121.60 1130.55" y="88" font-size="13.5" fill="#282828" font-weight="bold">align</text><text x="1054.60 1062.00 1070.84 1079.38 1090.86 1095.19 1101.31 1109.70 1117.80" y="710" font-size="13.5" fill="#282828" font-weight="bold">show&#160;ray:</text><text x="1136.00" y="691" font-size="13" fill="#333">0</text><text x="1136.00" y="710" font-size="13" fill="#333">3</text><text x="1136.00" y="729" font-size="13" fill="#333">0</text><text x="1241.00 1248.86" y="691" font-size="13" fill="#333">10</text><text x="1241.00" y="710" font-size="13" fill="#333">3</text><text x="1241.00" y="729" font-size="13" fill="#333">0</text><text x="1206.70 1216.98 1220.88 1224.78" y="710" font-size="13" fill="#333">+&#160;&#160;t</text><text x="198.50 205.74" y="820" font-size="13" fill="#333">x:</text><text x="218.50 222.92" y="820" font-size="13" fill="#333">--</text><text x="282.50 289.74" y="820" font-size="13" fill="#333">y:</text><text x="302.50 306.92" y="820" font-size="13" fill="#333">--</text><text x="366.50 372.92" y="820" font-size="13" fill="#333">z:</text><text x="385.50 389.92" y="820" font-size="13" fill="#333">--</text><text x="468.50 476.27 479.67 491.59 499.12 506.88 513.26 516.66 524.15 531.91 535.80 543.29 547.60 551.49 563.41 570.94 577.32 585.08" y="820" font-size="13" fill="#333">dimension&#160;of&#160;mesh:</text><text x="601.50 605.92" y="820" font-size="13" fill="#333">--</text><text x="662.70 670.19 675.21 681.93 685.82 689.21 696.73 704.48 712.24 717.03 724.77" y="820" font-size="13" fill="#333">arc&#160;length:</text><text x="741.30 749.20 753.15 761.05 768.95 776.85 784.75 792.65" y="820" font-size="13" fill="#333">0,000000</text><text x="879.40 891.52 899.14 907.02 913.51 921.16 925.12 931.96 939.85 944.96 951.45 959.06 964.17" y="820" font-size="13" fill="#333">mouse&#160;cursor:</text><text x="980.50" y="820" font-size="13" fill="#333">x</text><text x="996.40 1005.15 1012.33" y="820" font-size="13" fill="#333">NaN</text><text x="1060.50" y="820" font-size="13" fill="#333">y</text><text x="1076.40 1085.15 1092.33" y="820" font-size="13" fill="#333">NaN</text></svg>
</body></html>
